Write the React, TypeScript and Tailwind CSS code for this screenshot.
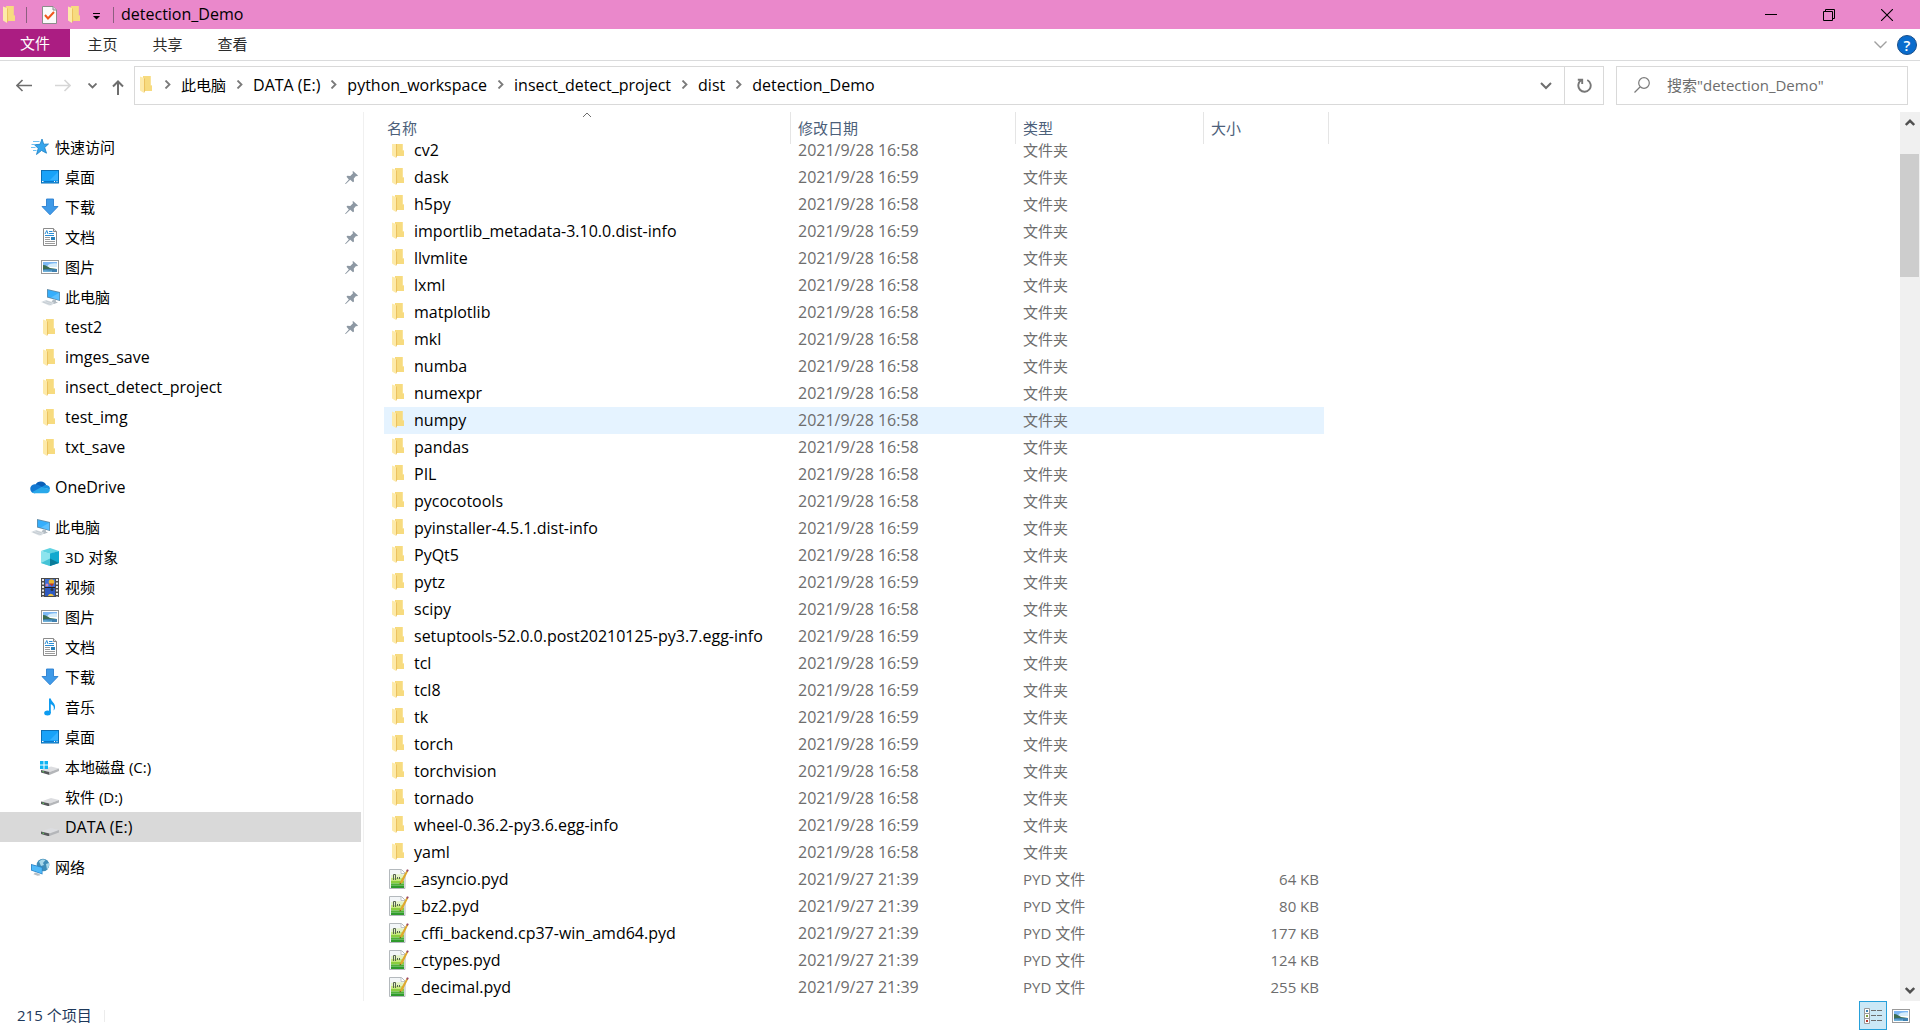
import type { ReactNode } from "react";

type IconName =
  | "star" | "desktop" | "download" | "document" | "picture" | "computer" | "folder"
  | "onedrive" | "cube" | "video" | "music" | "systemDrive" | "drive" | "network";

function FolderIcon() {
  return (
    <svg className="shrink-0" width="14" height="17" viewBox="0 0 14 17" aria-hidden="true">
      <path d="M3 0h7.5v9.5H12V15H3z" fill="#f6d777" />
      <path d="M3.5 0H11v9.5h1V15H6z" fill="#f9dd86" opacity=".6" />
      <path d="M0 .5 4 2v15L0 14.5z" fill="#fdeaa9" />
      <path d="M4 2v15l.8-1.5V3z" fill="#e9bd5a" />
    </svg>
  );
}

function StarIcon() {
  return (
    <svg width="20" height="18" viewBox="0 0 20 18" aria-hidden="true">
      <path d="M12 1l1.700 5.200 4.800-.2-3.800 3.500 1.800 5.700-5-2.700L6.500 16.500l1.700-6L4.500 6.700l5.500-.4z" fill="#35a5ec" stroke="#1a7fc4" strokeWidth=".8" />
      <path d="M3 3.500h6.500M1.500 6.500h4M1 9.500h4.500M3 12.500h3.500" stroke="#6fc0f2" strokeWidth="1" />
    </svg>
  );
}

function DesktopIcon() {
  return (
    <svg width="20" height="14" viewBox="0 0 20 14" aria-hidden="true">
      <rect x="1.500" y=".5" width="17" height="12.500" fill="#18a2f8" stroke="#0e6fb3" />
      <path d="M10 10 18 2v8z" fill="#35b1ff" />
      <path d="M2 11.500h16" stroke="#0a77c9" strokeWidth="1" />
      <path d="M2 11.500h1.500M14 11.500h1M16.500 11.500h1" stroke="#fff" />
    </svg>
  );
}

function DownloadIcon() {
  return (
    <svg width="20" height="18" viewBox="0 0 20 18" aria-hidden="true">
      <path d="M6.500 1h7v7.500H18L10 16.800 2 8.500h4.500z" fill="#3f9ae8" stroke="#2a7fd0" strokeWidth=".9" />
    </svg>
  );
}

function DocumentIcon() {
  return (
    <svg width="20" height="18" viewBox="0 0 20 18" aria-hidden="true">
      <path d="M3.500.5h10l3 3v14h-13z" fill="#fff" stroke="#8b8b8b" />
      <path d="M13.500.5v3h3" fill="#e4e4e4" stroke="#8b8b8b" />
      <path d="m5 6 1.800-3.500L8 6M9 3.500h3.500M9 5.500h5M5 7.500h9" stroke="#2a8dd4" fill="none" />
      <path d="M5 9.500h5M5 11.500h5M5 13.500h10M5 15.500h10" stroke="#9b9b9b" />
      <rect x="11" y="9" width="4" height="3" fill="#2b80b9" />
    </svg>
  );
}

function PictureIcon() {
  return (
    <svg width="20" height="14" viewBox="0 0 20 14" aria-hidden="true">
      <rect x="1.500" y=".5" width="17" height="13" fill="#fff" stroke="#9a9a9a" />
      <rect x="3" y="2" width="14" height="5" fill="#7db8f4" />
      <path d="M8 5c2-1 4-2 9-1.500V7H7z" fill="#d5ecfb" />
      <path d="M3 5c3 0 5 2 7 3l7 1v1H3z" fill="#3c6d52" />
      <path d="M3 9.500c5-1 9 0 14-.5v3H3z" fill="#3f80b0" />
      <path d="M3 10.500c4-.5 6 .5 9 0v1.500H3z" fill="#6fb0d8" />
    </svg>
  );
}

function ComputerIcon() {
  return (
    <svg width="20" height="18" viewBox="0 0 20 18" aria-hidden="true">
      <path d="m7 1 13 3v9L7 9.500z" fill="#5f8aa6" />
      <path d="m7.800 2 11.400 2.700v7.300L7.800 8.800z" fill="#35aefc" />
      <path d="m11 9.500 8.200-4.800v7.300z" fill="#5bc0ff" />
      <path d="m13 11.500 3 .8v1.500l2 .7-4 1.500-3-1z" fill="#b3bcc3" />
      <path d="m1 14 5-2 8 2.500-2 2.700-3 .3z" fill="#d8dee3" />
      <path d="m3 14 8 2.500M6 13l6 2" stroke="#b8c1c8" strokeWidth=".6" />
    </svg>
  );
}

function OneDriveIcon() {
  return (
    <svg width="20" height="14" viewBox="0 0 20 14" aria-hidden="true">
      <path d="M5.500 4.500A6 6 0 0 1 16.200 5L11 9z" fill="#0a5fb8" />
      <path d="M4.500 4.300c2.200-.5 4 .4 5.500 1.500L14 8l-9 5.300A4.500 4.500 0 0 1 4.500 4.300z" fill="#1379d2" />
      <path d="M10.500 7.500 13 6.200a5 5 0 0 1 3.200-1.100A4.200 4.200 0 0 1 20 9.300z" fill="#1790df" />
      <path d="M2 12.200 11.500 7l8.300 2.300c.3 2.300-1.300 4-3.300 4H4.500c-1 0-1.900-.4-2.500-1.100z" fill="#29a8ea" />
    </svg>
  );
}

function CubeIcon() {
  return (
    <svg width="20" height="18" viewBox="0 0 20 18" aria-hidden="true">
      <path d="m1 3 9-3 9 3-9 3z" fill="#5fd3e2" />
      <path d="m1 3 9 2.500V18l-9-3z" fill="#8de4ee" />
      <path d="m19 3-9 2.500V18l9-3z" fill="#10a9cf" />
      <path d="m1 15 9-4.500V18z" fill="#45c3d6" />
      <path d="m19 15-9-4.500V18z" fill="#0b7c99" />
    </svg>
  );
}

function VideoIcon() {
  return (
    <svg width="20" height="19" viewBox="0 0 20 19" aria-hidden="true">
      <rect x="1" width="18" height="19" fill="#4a4a4a" />
      <path d="M3 1v18M17 1v18" stroke="#e9e9e9" strokeWidth="2" strokeDasharray="2 1.500" />
      <rect x="5" y="1" width="10" height="8" fill="#3d6fd6" />
      <rect x="5" y="10" width="10" height="8" fill="#2f5ac0" />
      <circle cx="11.500" cy="4" r="2.800" fill="#e8b62e" />
      <path d="M9 5.500h5L12 8.500z" fill="#b8372c" />
      <circle cx="7" cy="7" r="1.500" fill="#d98ab5" />
      <circle cx="12" cy="11.500" r="1.500" fill="#28333f" />
      <path d="M8 18c1-3 4-3 6 0z" fill="#efc23c" />
      <path d="M5 9.500h10" stroke="#222" />
    </svg>
  );
}

function MusicIcon() {
  return (
    <svg width="20" height="18" viewBox="0 0 20 18" aria-hidden="true">
      <ellipse cx="7.500" cy="15" rx="3.300" ry="2.500" fill="#0d9bf0" />
      <path d="M9 .5h1.800c.5 3.500 5 4.500 4.200 9.500-.2 1.200-.8 2-1.500 2.500 1-3.300 0-5-2.700-6.500V15H9z" fill="#0d9bf0" />
    </svg>
  );
}

function DriveIcon() {
  return (
    <svg width="20" height="18" viewBox="0 0 20 18" aria-hidden="true">
      <path d="m1 13.500 10-3.500 8 2-9.500 3.500z" fill="#dcdde0" />
      <path d="m1 13.500 8.500 2v3L1 16z" fill="#55575a" />
      <path d="m9.500 15.500 9.500-3.500v2.500L9.500 18z" fill="#b4b6b9" />
      <path d="M2.500 15 4 15.500" stroke="#5fd35f" />
    </svg>
  );
}

function SystemDriveIcon() {
  return (
    <svg width="20" height="18" viewBox="0 0 20 18" aria-hidden="true">
      <path d="m1 12 10-3.500 8 2L9.500 14z" fill="#dcdde0" />
      <path d="M1 12l8.500 2v3L1 14.500z" fill="#55575a" />
      <path d="m9.500 14 9.500-3.500V13l-9.500 4z" fill="#b4b6b9" />
      <path d="M2.500 13.500 4 14" stroke="#5fd35f" />
      <path d="M0 3h3.500v3.500H0zM4.500 3H8v3.500H4.500zM0 7.500h3.500V11H0zM4.500 7.500H8V11H4.500z" fill="#10b4f2" />
    </svg>
  );
}

function NetworkIcon() {
  return (
    <svg width="20" height="18" viewBox="0 0 20 18" aria-hidden="true">
      <circle cx="13" cy="7" r="6.300" fill="#3f8db8" />
      <path d="M9 3.500c2-2.500 5-2.500 6.500-1.500L13 5l1 2-3 1zM16 6l3-1c.5 3-.5 5-2 6.500z" fill="#a8d8ea" />
      <path d="m1 6 11.500 3v7.500L1 12.500z" fill="#2b84c8" />
      <path d="m1.800 7 10 2.700v5.800l-10-3.400z" fill="#4fb9f8" />
      <path d="m5 14.500 4 1.200 1.500 1.500-3 .6-4-1.500z" fill="#b5bdc4" />
    </svg>
  );
}

function PydIcon() {
  return (
    <svg width="20" height="20" viewBox="0 0 20 20" aria-hidden="true">
      <path d="M.5.5h12l3.500 3.500v15.500H.5z" fill="#f3f6f8" stroke="#b4b9bd" />
      <path d="M2 6c5-1 9-1 13-.5V9H2z" fill="#e3f2c4" />
      <path d="M2 9h13v3H2z" fill="#c5e77c" />
      <path d="M2 12h13v2.500H2z" fill="#8ccd3f" />
      <path d="M2 14.500h13v2H2z" fill="#4fb236" />
      <path d="M2 16.500h13V19H2z" fill="#2f9a2c" />
      <path d="M12 1v3.500h4" fill="#fff" stroke="#b4b9bd" strokeWidth=".8" />
      <path d="M4.500 11V5.500h2V11M8.500 8v2M10.500 8v2" stroke="#56634f" fill="none" />
      <path d="m10.500 15.500 1-3.500L17.500 1.500l1.500 1-5.500 11z" fill="#dfa92e" />
      <path d="m17.200 2 .8-1.700 1.800.7-1 2z" fill="#9c4a64" />
      <path d="m10.500 15.500.4-2 1.300.9z" fill="#6b5424" />
    </svg>
  );
}

function PinIcon() {
  return (
    <svg width="13" height="13" viewBox="0 0 13 13" aria-hidden="true">
      <path d="M8 0 13 4.500l-1 .8-1-.3-2.200 2.500.2 3-1 .8-2.800-2.600L.8 13 0 12.700l3.800-4.200L1.500 5.800l.8-1 3 .2L8 2.300 7.500.8z" fill="#8d98a3" />
    </svg>
  );
}

const icons: Record<IconName, () => ReactNode> = {
  star: StarIcon, desktop: DesktopIcon, download: DownloadIcon, document: DocumentIcon,
  picture: PictureIcon, computer: ComputerIcon, folder: FolderIcon, onedrive: OneDriveIcon,
  cube: CubeIcon, video: VideoIcon, music: MusicIcon, systemDrive: SystemDriveIcon,
  drive: DriveIcon, network: NetworkIcon,
};

function Chevron({ className, d, size, width }: { className: string; d: string; size: [number, number]; width: number }) {
  return (
    <svg className={className} width={size[0]} height={size[1]} viewBox={`0 0 ${size[0]} ${size[1]}`} fill="none" stroke="currentColor" strokeWidth={width} aria-hidden="true">
      <path d={d} />
    </svg>
  );
}

/* Latin-only labels are set one step larger than Chinese ones so that both look the same size. */
const labelSize = (text: string) => (/[\u4e00-\u9fff]/.test(text) ? "text-[15px]" : "text-[16px]");

type NavEntry = { icon: IconName; label: string; pinned?: boolean; selected?: boolean };

const navGroups: { root: NavEntry; items: NavEntry[] }[] = [
  {
    root: { icon: "star", label: "快速访问" },
    items: [
      { icon: "desktop", label: "桌面", pinned: true },
      { icon: "download", label: "下载", pinned: true },
      { icon: "document", label: "文档", pinned: true },
      { icon: "picture", label: "图片", pinned: true },
      { icon: "computer", label: "此电脑", pinned: true },
      { icon: "folder", label: "test2", pinned: true },
      { icon: "folder", label: "imges_save" },
      { icon: "folder", label: "insect_detect_project" },
      { icon: "folder", label: "test_img" },
      { icon: "folder", label: "txt_save" },
    ],
  },
  { root: { icon: "onedrive", label: "OneDrive" }, items: [] },
  {
    root: { icon: "computer", label: "此电脑" },
    items: [
      { icon: "cube", label: "3D 对象" },
      { icon: "video", label: "视频" },
      { icon: "picture", label: "图片" },
      { icon: "document", label: "文档" },
      { icon: "download", label: "下载" },
      { icon: "music", label: "音乐" },
      { icon: "desktop", label: "桌面" },
      { icon: "systemDrive", label: "本地磁盘 (C:)" },
      { icon: "drive", label: "软件 (D:)" },
      { icon: "drive", label: "DATA (E:)", selected: true },
    ],
  },
  { root: { icon: "network", label: "网络" }, items: [] },
];

const folders: [string, string][] = [
  ["cv2", "58"], ["dask", "59"], ["h5py", "58"], ["importlib_metadata-3.10.0.dist-info", "59"],
  ["llvmlite", "58"], ["lxml", "58"], ["matplotlib", "58"], ["mkl", "58"], ["numba", "58"],
  ["numexpr", "58"], ["numpy", "58"], ["pandas", "58"], ["PIL", "58"], ["pycocotools", "58"],
  ["pyinstaller-4.5.1.dist-info", "59"], ["PyQt5", "58"], ["pytz", "59"], ["scipy", "58"],
  ["setuptools-52.0.0.post20210125-py3.7.egg-info", "59"], ["tcl", "59"], ["tcl8", "59"],
  ["tk", "59"], ["torch", "59"], ["torchvision", "58"], ["tornado", "58"],
  ["wheel-0.36.2-py3.6.egg-info", "59"], ["yaml", "58"],
];

const files: [string, string][] = [
  ["_asyncio.pyd", "64 KB"], ["_bz2.pyd", "80 KB"], ["_cffi_backend.cp37-win_amd64.pyd", "177 KB"],
  ["_ctypes.pyd", "124 KB"], ["_decimal.pyd", "255 KB"],
];

type Entry = { name: string; date: string; kind: string; size: string; isFolder: boolean };

const entries: Entry[] = [
  ...folders.map(([name, minute]) => ({ name, date: `2021/9/28 16:${minute}`, kind: "文件夹", size: "", isFolder: true })),
  ...files.map(([name, size]) => ({ name, date: "2021/9/27 21:39", kind: "PYD 文件", size, isFolder: false })),
];

const crumbs = ["此电脑", "DATA (E:)", "python_workspace", "insect_detect_project", "dist", "detection_Demo"];

function TitleBar() {
  return (
    <header className="flex h-[29px] shrink-0 items-center bg-[#ea88cb] pr-1">
      <div className="flex flex-1 items-center pl-[3px]">
        <FolderIcon />
        <span className="ml-[9px] h-4 w-px bg-[#8d5f80]" />
        <button type="button" aria-label="属性" className="ml-[15px]">
          <svg width="15" height="18" viewBox="0 0 15 18" aria-hidden="true">
            <path d="M.5.5H11l3.500 3.500v13.500H.5z" fill="#fafafa" stroke="#8c8c8c" />
            <path d="M11 .5V4h3.500" fill="#ddd" stroke="#8c8c8c" />
            <path d="m3 9 3 3.500L12 6" fill="none" stroke="#f0561d" strokeWidth="2" />
          </svg>
        </button>
        <button type="button" aria-label="新建文件夹" className="ml-[11px]"><FolderIcon /></button>
        <button type="button" aria-label="自定义快速访问工具栏" className="ml-[11px] pt-1">
          <svg width="7" height="7" viewBox="0 0 7 7" aria-hidden="true">
            <path d="M0 .5h7" stroke="#000" />
            <path d="M0 3h7L3.500 6.500z" />
          </svg>
        </button>
        <span className="ml-[13px] h-4 w-px bg-[#8d5f80]" />
        <h1 className="ml-[7px] pb-0.5 text-[16px] text-black">detection_Demo</h1>
      </div>
      <button type="button" aria-label="最小化" className="flex h-full w-[58px] items-center justify-center">
        <svg width="12" height="12" viewBox="0 0 12 12" aria-hidden="true"><path d="M0 5.500h12" stroke="#000" /></svg>
      </button>
      <button type="button" aria-label="还原" className="flex h-full w-[58px] items-center justify-center">
        <svg width="12" height="12" viewBox="0 0 12 12" fill="none" stroke="#000" aria-hidden="true">
          <path d="M.5 2.500h9v9h-9zM2.500 2.500v-2h9v9h-2" />
        </svg>
      </button>
      <button type="button" aria-label="关闭" className="flex h-full w-[58px] items-center justify-center">
        <svg width="12" height="12" viewBox="0 0 12 12" fill="none" stroke="#000" strokeWidth="1.100" aria-hidden="true">
          <path d="m0 0 12 12M12 0 0 12" />
        </svg>
      </button>
    </header>
  );
}

function Ribbon() {
  return (
    <div className="flex h-8 shrink-0 items-start border-b border-[#dadbdc]">
      <button type="button" className="h-7 w-[70px] bg-[#ab1d82] text-white">文件</button>
      {["主页", "共享", "查看"].map((tab) => (
        <button key={tab} type="button" className="h-[29px] w-[65px] text-[#2b2b2b]">{tab}</button>
      ))}
      <div className="ml-auto flex h-[31px] items-center gap-2.5 pr-[3px]">
        <button type="button" aria-label="展开功能区">
          <Chevron className="text-[#a0a0a0]" size={[13, 8]} d="m.5.5 6 6 6-6" width={1.4} />
        </button>
        <button type="button" aria-label="帮助" className="flex size-5 items-center justify-center rounded-full border border-[#1a4f8a] bg-[#0a6ccd] font-semibold text-white">?</button>
      </div>
    </div>
  );
}

function AddressBar() {
  return (
    <div className="flex shrink-0 items-center pt-[5px] pr-3 pb-[7px]">
      <div className="flex w-[134px] items-center pl-4 text-[#6e6e6e]">
        <button type="button" aria-label="后退">
          <svg width="16" height="13" viewBox="0 0 16 13" fill="none" stroke="currentColor" strokeWidth="1.600" aria-hidden="true"><path d="M16 6.500H1.500M6.500 1 1 6.500 6.500 12" /></svg>
        </button>
        <button type="button" aria-label="前进" className="ml-[23px] text-[#d6d6d6]">
          <svg width="16" height="13" viewBox="0 0 16 13" fill="none" stroke="currentColor" strokeWidth="1.600" aria-hidden="true"><path d="M0 6.500h14.500M9.500 1 15 6.500 9.500 12" /></svg>
        </button>
        <button type="button" aria-label="最近浏览的位置" className="ml-[17px]">
          <Chevron className="" size={[9, 6]} d="m.5.5 4 4 4-4" width={1.8} />
        </button>
        <button type="button" aria-label="上移" className="ml-[15px] pt-1">
          <svg width="12" height="15" viewBox="0 0 12 15" fill="none" stroke="currentColor" strokeWidth="2" aria-hidden="true"><path d="M6 15V1.500M1 6.500l5-5 5 5" /></svg>
        </button>
      </div>
      <div className="flex h-[39px] min-w-0 flex-1 items-stretch border border-[#d9d9d9]">
        <nav aria-label="地址" className="flex flex-1 items-center pb-0.5 pl-[5px]">
          <FolderIcon />
          {crumbs.map((crumb) => (
            <span key={crumb} className="flex items-center">
              <Chevron className="mx-2.5 text-[#7a7a7a]" size={[7, 9]} d="m1.500.5 4 4-4 4" width={1.8} />
              <a href="#" className={`whitespace-nowrap text-black ${labelSize(crumb)}`}>{crumb}</a>
            </span>
          ))}
        </nav>
        <button type="button" aria-label="以前的位置" className="flex w-9 items-center justify-center text-[#6e6e6e]">
          <Chevron className="" size={[12, 8]} d="m1 1 5 5 5-5" width={2} />
        </button>
        <button type="button" aria-label="刷新" className="flex w-[39px] items-center justify-center border-l border-[#d9d9d9] text-[#777]">
          <svg width="15" height="15" viewBox="0 0 15 15" fill="none" stroke="currentColor" strokeWidth="1.900" aria-hidden="true">
            <path d="M10.300 2A6.200 6.200 0 1 1 4.200 2.300M.8 1.700h4.400v4.400" />
          </svg>
        </button>
      </div>
      <label className="ml-3 flex h-[39px] w-[292px] items-center border border-[#d9d9d9] pb-0.5 pl-[17px]">
        <svg width="16" height="16" viewBox="0 0 16 16" fill="none" stroke="#7b7b7b" strokeWidth="1.200" aria-hidden="true">
          <circle cx="10" cy="6" r="5.300" /><path d="M6 10 .5 15.500" />
        </svg>
        <input type="search" aria-label="搜索" placeholder={'搜索"detection_Demo"'} className="ml-[17px] min-w-0 flex-1 outline-none placeholder:text-[#6d6d6d]" />
      </label>
    </div>
  );
}

function NavRow({ entry, root }: { entry: NavEntry; root?: boolean }) {
  const Icon = icons[entry.icon];
  return (
    <a
      href="#"
      aria-current={entry.selected ? "page" : undefined}
      className={`flex h-[30px] items-center pr-[3px] text-black ${root ? "pl-[30px]" : "pl-10"} ${entry.selected ? "bg-[#d9d9d9]" : ""}`}
    >
      <span className="flex w-5 justify-center"><Icon /></span>
      <span className={`ml-[5px] flex-1 truncate ${labelSize(entry.label)}`}>{entry.label}</span>
      {entry.pinned && <PinIcon />}
    </a>
  );
}

function Sidebar() {
  return (
    <nav aria-label="导航窗格" className="flex w-[364px] shrink-0 flex-col gap-2.5 border-r border-[#f0f0f0] pt-5 pr-0.5">
      {navGroups.map((group) => (
        <div key={group.root.label}>
          <NavRow entry={group.root} root />
          {group.items.map((entry) => <NavRow key={entry.label} entry={entry} />)}
        </div>
      ))}
    </nav>
  );
}

function FileRow({ entry, clipped, hovered }: { entry: Entry; clipped: boolean; hovered: boolean }) {
  const box = clipped ? "flex h-5 items-end" : "flex h-[27px] items-end";
  const line = "flex h-[27px] shrink-0 items-center pb-0.5";
  const bg = hovered ? "bg-[#e5f3ff]" : "";
  const iconSlot = clipped ? "flex h-3.5 w-5 items-end justify-center self-end overflow-hidden mb-1" : "flex w-5 justify-center";
  return (
    <tr>
      <td className={bg}>
        <div className={box}>
          <span className={`${line} pl-[5px] text-black`}>
            <span className={iconSlot}>{entry.isFolder ? <FolderIcon /> : <PydIcon />}</span>
            <span className="ml-[5px] whitespace-nowrap text-[16px]">{entry.name}</span>
          </span>
        </div>
      </td>
      <td className={bg}><div className={box}><span className={`${line} pl-2 text-[16px]`}>{entry.date}</span></div></td>
      <td className={bg}><div className={box}><span className={`${line} pl-2`}>{entry.kind}</span></div></td>
      <td className={bg}><div className={box}><span className={`${line} ml-auto pr-[5px]`}>{entry.size}</span></div></td>
      <td />
    </tr>
  );
}

function FileList() {
  return (
    <main className="min-w-0 flex-1 overflow-hidden pl-5">
      <table className="w-[945px] table-fixed border-separate border-spacing-0 text-[#6d6d6d]">
        <colgroup>
          <col className="w-[406px]" />
          <col className="w-[225px]" />
          <col className="w-[188px]" />
          <col className="w-[121px]" />
          <col className="w-[5px]" />
        </colgroup>
        <thead>
          <tr className="h-8 text-left text-[#4c607a]">
            <th className="relative p-0 pl-[3px] font-normal">
              名称
              <Chevron className="absolute top-0 left-1/2 -translate-x-1/2 text-[#6d6d6d]" size={[9, 6]} d="m.5 5 4-4 4 4" width={1} />
            </th>
            <th className="border-l border-[#e5e5e5] p-0 pl-[7px] font-normal">修改日期</th>
            <th className="border-l border-[#e5e5e5] p-0 pl-[7px] font-normal">类型</th>
            <th className="border-l border-[#e5e5e5] p-0 pl-[7px] font-normal">大小</th>
            <td className="border-r border-[#e5e5e5] p-0" />
          </tr>
        </thead>
        <tbody>
          {entries.map((entry, i) => (
            <FileRow key={entry.name} entry={entry} clipped={i === 0} hovered={entry.name === "numpy"} />
          ))}
        </tbody>
      </table>
    </main>
  );
}

function ScrollBar() {
  return (
    <div className="flex w-5 shrink-0 flex-col bg-[#f0f0f0] text-[#505050]">
      <button type="button" aria-label="向上滚动" className="flex h-5 items-center justify-center">
        <Chevron className="" size={[10, 7]} d="m.8 6 4.200-4.200L9.200 6" width={2.4} />
      </button>
      <div className="flex flex-1 flex-col pt-[22px] pr-px">
        <div className="h-[123px] bg-[#cdcdcd]" />
      </div>
      <button type="button" aria-label="向下滚动" className="flex h-[22px] items-center justify-center">
        <Chevron className="" size={[10, 7]} d="m.8 1 4.200 4.200L9.200 1" width={2.4} />
      </button>
    </div>
  );
}

function StatusBar() {
  return (
    <footer className="flex h-[29px] shrink-0 items-center pr-[9px] text-[#1e395b]">
      <span className="pb-0.5 pl-[17px]">215 个项目</span>
      <span className="ml-3 h-3 w-px bg-[#ececec]" />
      <button type="button" aria-label="详细信息" aria-pressed="true" className="ml-auto flex h-[29px] w-7 items-center justify-center border border-[#26a0da] bg-[#cbe8f6]">
        <svg width="18" height="16" viewBox="0 0 18 16" aria-hidden="true">
          <path d="M.5.5h5v5h-5zM.5 5.500h5v5h-5zM.5 10.500h5v5h-5z" fill="#fff" stroke="#9a9a9a" />
          <path d="M2 2h2v2H2z" fill="#3f80b0" />
          <path d="M2 7h2v2H2z" fill="#7fa03c" />
          <path d="M2 12h2v2H2z" fill="#b8372c" />
          <path d="M7 2.500h5M13 2.500h5M7 7.500h5M13 7.500h5M7 12.500h5M13 12.500h5" stroke="#6d6d6d" />
        </svg>
      </button>
      <button type="button" aria-label="大缩略图" className="ml-1"><PictureIcon /></button>
    </footer>
  );
}

export default function App() {
  return (
    <div className="flex h-screen flex-col overflow-hidden bg-white font-['Open_Sans','Noto_Sans_CJK_SC',sans-serif] text-[15px] leading-5">
      <TitleBar />
      <Ribbon />
      <AddressBar />
      <div className="flex min-h-0 flex-1">
        <Sidebar />
        <FileList />
        <ScrollBar />
      </div>
      <StatusBar />
    </div>
  );
}
